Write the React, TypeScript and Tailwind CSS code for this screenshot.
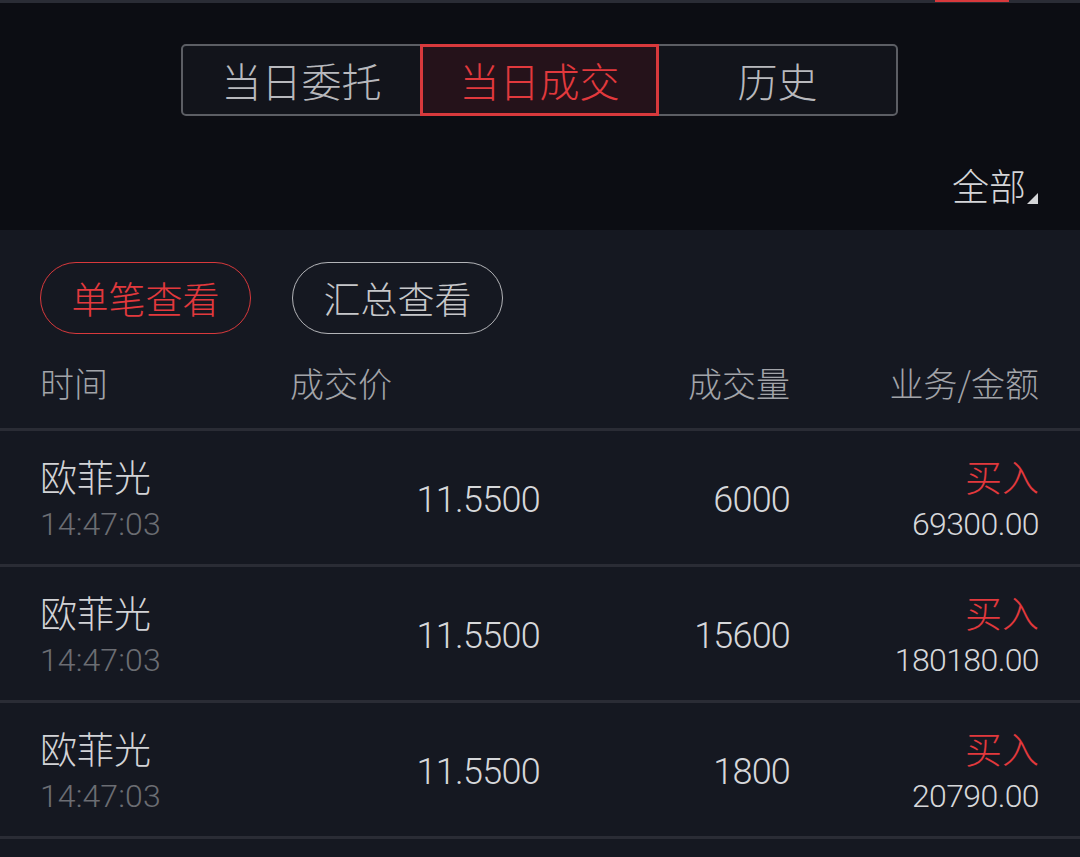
import React from "react";

const CJK = "font-['Noto_Sans_CJK_SC','Noto_Sans',sans-serif]";
const NUM = "font-['Roboto','Noto_Sans',sans-serif]";

const rows = [
  { name: "欧菲光", time: "14:47:03", price: "11.5500", vol: "6000", amt: "69300.00" },
  { name: "欧菲光", time: "14:47:03", price: "11.5500", vol: "15600", amt: "180180.00" },
  { name: "欧菲光", time: "14:47:03", price: "11.5500", vol: "1800", amt: "20790.00" },
];

export default function App() {
  return (
    <div className={`w-[1080px] h-[857px] overflow-hidden bg-[#151821] ${CJK}`}>
      {/* top thin bar */}
      <div className="h-[3px] bg-[#2a2c35] flex">
        <div className="ml-[935px] w-[74px] h-[2px] bg-[#d8393c]" />
      </div>

      {/* top section */}
      <div className="h-[227px] bg-[#0c0d13] flex flex-col">
        <div className="mt-[41px] flex pl-[181px]">
          <div className="flex w-[717px] h-[72px] rounded-[5px] border-2 border-[#5c5e64] bg-[#12141b]">
            <div className="w-[237px] flex items-center justify-center text-[40px] leading-none text-[#b8b9bd] font-light">
              当日委托
            </div>
            <div className="w-[239px] -my-[2px] flex items-center justify-center border-[3px] border-[#d8393c] bg-[#25121a] text-[40px] leading-none text-[#e2393d] font-light">
              当日成交
            </div>
            <div className="flex-1 flex items-center justify-center text-[40px] leading-none text-[#b8b9bd] font-light">
              历史
            </div>
          </div>
        </div>
        <div className="mt-[44px] h-[50px] flex items-center justify-end pr-[42px]">
          <span className="text-[37px] leading-none text-[#d4d5d8] font-light">全部</span>
          <svg width="11" height="11" viewBox="0 0 11 11" className="self-end mb-[6px] ml-[1px]">
            <polygon points="11,0 11,11 0,11" fill="#d4d5d8" />
          </svg>
        </div>
      </div>

      {/* pills */}
      <div className="mt-[32px] flex gap-[41px] pl-[40px]">
        <div className="w-[211px] h-[72px] rounded-full border border-[#d8393c] flex items-center justify-center text-[37px] leading-none text-[#e2393d] font-light">
          单笔查看
        </div>
        <div className="w-[211px] h-[72px] rounded-full border border-[#b3b4b8] flex items-center justify-center text-[37px] leading-none text-[#c6c7ca] font-light">
          汇总查看
        </div>
      </div>

      {/* header */}
      <div className="h-[97px] pt-[29px] border-b-[3px] border-[#2a2c35] flex pl-[40px] pr-[41px] text-[34px] leading-[40px] text-[#a2a4a9] font-light">
        <div className="w-[250px]">时间</div>
        <div className="w-[250px]">成交价</div>
        <div className="w-[250px] text-right">成交量</div>
        <div className="flex-1 text-right">业务/金额</div>
      </div>

      {/* rows */}
      {rows.map((r, i) => (
        <div key={i} className="h-[136px] border-b-[3px] border-[#2a2c35] flex pl-[40px] pr-[41px]">
          <div className="w-[250px] flex flex-col pt-[25px]">
            <div className="text-[37px] leading-[40px] text-[#d2d3d6] font-light">{r.name}</div>
            <div className={`${NUM} mt-[10px] text-[32px] leading-[36px] text-[#6b6d73] font-light tracking-[0.1px]`}>{r.time}</div>
          </div>
          <div className={`${NUM} w-[250px] flex items-center justify-end pt-[4px] text-[36px] leading-none text-[#d6d7da] font-light tracking-[-0.7px]`}>
            {r.price}
          </div>
          <div className={`${NUM} w-[250px] flex items-center justify-end pt-[4px] text-[36px] leading-none text-[#d6d7da] font-light tracking-[-0.8px]`}>
            {r.vol}
          </div>
          <div className="flex-1 flex flex-col items-end pt-[25px]">
            <div className="text-[37px] leading-[40px] text-[#e2393d] font-light">买入</div>
            <div className={`${NUM} mt-[10px] text-[32px] leading-[36px] text-[#d6d7da] font-light tracking-[-0.6px]`}>{r.amt}</div>
          </div>
        </div>
      ))}
    </div>
  );
}
